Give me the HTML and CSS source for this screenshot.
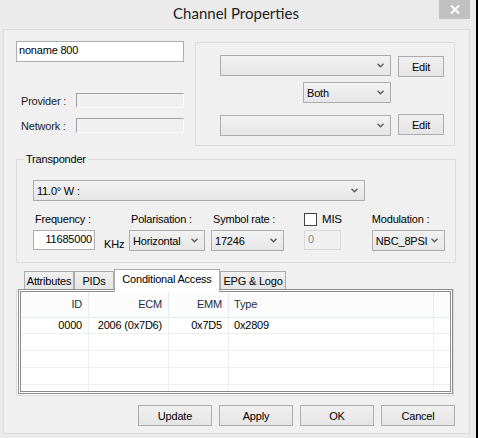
FILE: index.html
```html
<!DOCTYPE html>
<html>
<head>
<meta charset="utf-8">
<link rel="stylesheet" href="styles.css">
</head>
<body>
<div class="window">
  <div class="titlebar">
    <span class="title">Channel Properties</span>
    <span class="close"><svg width="10" height="9" viewBox="0 0 10 9"><path d="M1 0.5 L9 8.5 M9 0.5 L1 8.5" stroke="#fff" stroke-width="2"/></svg></span>
  </div>
  <div class="client">
    <div class="top">
      <div class="leftcol">
        <div class="textbox name">noname 800</div>
        <div class="field provider"><span class="lbl">Provider :</span><span class="textbox disabled"></span></div>
        <div class="field network"><span class="lbl">Network :</span><span class="textbox disabled"></span></div>
      </div>
      <div class="group">
        <div class="grow">
          <div class="combo c171"><span></span><svg class="chev" width="7" height="5" viewBox="0 0 7 5"><path d="M0.5 0.8 L3.5 3.8 L6.5 0.8" fill="none" stroke="#5a5a5a" stroke-width="1.4"/></svg></div>
          <div class="btn edit e1">Edit</div>
        </div>
        <div class="grow rb">
          <div class="combo both"><span>Both</span><svg class="chev" width="7" height="5" viewBox="0 0 7 5"><path d="M0.5 0.8 L3.5 3.8 L6.5 0.8" fill="none" stroke="#5a5a5a" stroke-width="1.4"/></svg></div>
        </div>
        <div class="grow rc">
          <div class="combo c171 c3"><span></span><svg class="chev" width="7" height="5" viewBox="0 0 7 5"><path d="M0.5 0.8 L3.5 3.8 L6.5 0.8" fill="none" stroke="#5a5a5a" stroke-width="1.4"/></svg></div>
          <div class="btn edit">Edit</div>
        </div>
      </div>
    </div>

    <fieldset class="transponder">
      <legend>Transponder</legend>
      <div class="combo sat"><span>11.0° W :</span><svg class="chev" width="7" height="5" viewBox="0 0 7 5"><path d="M0.5 0.8 L3.5 3.8 L6.5 0.8" fill="none" stroke="#5a5a5a" stroke-width="1.4"/></svg></div>
      <div class="params">
        <div class="pcol freq">
          <div class="plabel">Frequency :</div>
          <div class="prow"><div class="textbox num">11685000</div><span class="unit">KHz</span></div>
        </div>
        <div class="pcol pol">
          <div class="plabel">Polarisation :</div>
          <div class="combo w76"><span>Horizontal</span><svg class="chev" width="7" height="5" viewBox="0 0 7 5"><path d="M0.5 0.8 L3.5 3.8 L6.5 0.8" fill="none" stroke="#5a5a5a" stroke-width="1.4"/></svg></div>
        </div>
        <div class="pcol sym">
          <div class="plabel">Symbol rate :</div>
          <div class="combo w73"><span>17246</span><svg class="chev" width="7" height="5" viewBox="0 0 7 5"><path d="M0.5 0.8 L3.5 3.8 L6.5 0.8" fill="none" stroke="#5a5a5a" stroke-width="1.4"/></svg></div>
        </div>
        <div class="pcol mis">
          <div class="plabel check"><span class="box"></span><span>MIS</span></div>
          <div class="textbox disabled2">0</div>
        </div>
        <div class="pcol mod">
          <div class="plabel nopad">Modulation :</div>
          <div class="combo w73"><span>NBC_8PSI</span><svg class="chev" width="7" height="5" viewBox="0 0 7 5"><path d="M0.5 0.8 L3.5 3.8 L6.5 0.8" fill="none" stroke="#5a5a5a" stroke-width="1.4"/></svg></div>
        </div>
      </div>
    </fieldset>

    <div class="tabs">
      <div class="tab t1">Attributes</div>
      <div class="tab t2">PIDs</div>
      <div class="tab t3 active">Conditional Access</div>
      <div class="tab t4">EPG &amp; Logo</div>
    </div>
    <div class="tabpanel">
      <div class="listview">
        <div class="lrow head">
          <div class="c r">ID</div><div class="c r">ECM</div><div class="c r">EMM</div><div class="c l">Type</div><div class="c"></div>
        </div>
        <div class="lrow">
          <div class="c r">0000</div><div class="c r">2006 (0x7D6)</div><div class="c r">0x7D5</div><div class="c l">0x2809</div><div class="c"></div>
        </div>
        <div class="lrow"><div class="c"></div><div class="c"></div><div class="c"></div><div class="c"></div><div class="c"></div></div>
        <div class="lrow"><div class="c"></div><div class="c"></div><div class="c"></div><div class="c"></div><div class="c"></div></div>
        <div class="lrow"><div class="c"></div><div class="c"></div><div class="c"></div><div class="c"></div><div class="c"></div></div>
        <div class="lrow"><div class="c"></div><div class="c"></div><div class="c"></div><div class="c"></div><div class="c"></div></div>
      </div>
    </div>

    <div class="buttons">
      <div class="btn big">Update</div>
      <div class="btn big">Apply</div>
      <div class="btn big">OK</div>
      <div class="btn big">Cancel</div>
    </div>
  </div>
</div>
</body>
</html>
```

FILE: styles.css
```css
* { box-sizing: border-box; }
html, body { margin: 0; padding: 0; }
body {
  width: 478px;
  height: 438px;
  overflow: hidden;
  background: #ebebeb;
  font-family: "Liberation Sans", Arial, sans-serif;
  font-size: 11px;
  letter-spacing: -0.2px;
  color: #000;
}
.window {
  width: 478px;
  height: 438px;
  border-right: 2px solid #000;
  background: #ebebeb;
}
.titlebar {
  height: 29px;
  display: grid;
  grid-template-columns: 1fr auto 1fr;
  padding-right: 4px;
}
.title {
  grid-column: 2;
  font-family: Lato, "Noto Sans", sans-serif;
  font-size: 15px;
  letter-spacing: 0;
  line-height: 27px;
  color: #222;
}
.close {
  grid-column: 3;
  justify-self: end;
  width: 31px;
  height: 19px;
  margin-right: 2px;
  background: #c1c1c1;
  display: flex;
  align-items: center;
  justify-content: center;
}
.client {
  margin: 0 6px 4px 3px;
  height: 405px;
  border: 1px solid #dadada;
  background: #f0f0f0;
}

/* generic controls */
.textbox {
  display: block;
  background: #fff;
  border: 1px solid #abadb3;
  line-height: 17px;
  padding: 0 2px;
  white-space: nowrap;
}
.textbox.disabled {
  background: #f0f0f0;
  border-color: #a0a0a0 #fff #fff #a0a0a0;
}
.textbox.disabled2 {
  background: #f0f0f0;
  border-color: #d9d9d9;
  color: #8a8a8a;
  width: 37px;
  height: 20px;
  padding-left: 3px;
}
.combo {
  display: flex;
  align-items: center;
  justify-content: space-between;
  height: 21px;
  border: 1px solid #acacac;
  background: linear-gradient(#f2f2f2, #e6e6e6);
  padding: 0 6px 0 3px;
  white-space: nowrap;
}
.chev { flex: none; }
.btn {
  display: flex;
  align-items: center;
  justify-content: center;
  border: 1px solid #acacac;
  background: linear-gradient(#f0f0f0, #e5e5e5);
  height: 21px;
}

/* top section */
.top {
  display: flex;
  padding: 11px 0 0 12px;
  height: 116px;
}
.leftcol { width: 168px; }
.name { height: 21px; }
.field { display: flex; align-items: center; }
.field.provider { margin-top: 31px; }
.field.network { margin-top: 10px; }
.lbl { width: 60px; padding-left: 5px; color: #1a1a1a; }
.field .textbox { width: 108px; height: 15px; }

.group {
  margin-left: 11px;
  margin-top: 1px;
  width: 260px;
  height: 104px;
  border: 1px solid #dcdcdc;
  padding: 12px 0 0 24px;
}
.grow { display: flex; align-items: flex-start; }
.c171 { width: 171px; }
.edit { width: 46px; margin-left: 7px; }
.e1 { margin-top: 1px; }
.rb { margin-top: 5px; }
.both { width: 88px; margin-left: 83px; }
.rc { margin-top: 11px; }
.c3 { margin-top: 1px; }

/* transponder */
.transponder {
  margin: 7px 0 0 12px;
  width: 440px;
  border: 1px solid #dcdcdc;
  padding: 0 0 11px 16px;
}
.transponder legend {
  margin-left: -9px;
  padding: 0 2px;
  line-height: 13px;
}
.sat { width: 332px; margin-top: 14px; }
.params { display: flex; margin-top: 12px; }
.pcol { display: flex; flex-direction: column; }
.plabel { height: 17px; line-height: 13px; padding-left: 2px; white-space: nowrap; }
.plabel.nopad { padding-left: 0; }
.prow { display: flex; align-items: flex-end; }
.num { width: 62px; height: 20px; text-align: right; }
.unit { margin-left: 9px; line-height: 13px; margin-bottom: -1px; }
.freq { width: 96px; }
.w76 { width: 76px; }
.w73 { width: 73px; }
.pol { margin-right: 6px; }
.sym { margin-right: 20px; }
.mis { margin-right: 30px; }
.check { display: flex; align-items: center; gap: 5px; margin-top: -4px; height: 21px; padding-left: 0; }
.check .box { width: 13px; height: 13px; border: 1px solid #444; background: #fff; }
.check span:last-child { font-size: 11.5px; }

/* tabs */
.tabs {
  display: flex;
  align-items: flex-end;
  margin: 6px 0 0 20px;
  height: 20px;
}
.tab {
  height: 18px;
  border: 1px solid #acacac;
  border-bottom: none;
  background: linear-gradient(#f0f0f0, #e5e5e5);
  display: flex;
  align-items: center;
  justify-content: center;
  white-space: nowrap;
  padding-top: 1px;
}
.t1 { width: 50px; }
.t2 { width: 40px; }
.t3 { width: 106px; }
.t4 { width: 66px; }
.tab.active {
  height: 23px;
  margin-bottom: -3px;
  background: #fff;
  position: relative;
  z-index: 1;
  align-items: flex-start;
  padding-top: 3px;
}
.tabpanel {
  margin-left: 12px;
  width: 438px;
  height: 107px;
  border: 1px solid #d9d9d9;
  border-top: none;
  background: #fff;
  padding: 0 0 1px 1px;
}
.listview {
  height: 105px;
  border: 3px double #8c8c8c;
  background: #fff;
  overflow: hidden;
}
.lrow {
  display: grid;
  grid-template-columns: 68px 80px 60px 205px 1fr;
  height: 17px;
}
.lrow .c {
  border-right: 1px solid #efefef;
  border-bottom: 1px solid #efefef;
  line-height: 16px;
  white-space: nowrap;
}
.lrow .c:last-child { border-right: none; }
.lrow .c.r { text-align: right; padding-right: 6px; }
.lrow .c.l { padding-left: 5px; }
.lrow.head { height: 25px; background: #fcfcfc; color: #1e2e44; }
.lrow.head .c {
  border-right-color: #e3eaf5;
  border-bottom-color: #e3eaf5;
  line-height: 25px;
}

/* bottom buttons */
.buttons {
  display: flex;
  gap: 7px;
  margin: 9px 0 0 134px;
}
.big { width: 74px; }
```
